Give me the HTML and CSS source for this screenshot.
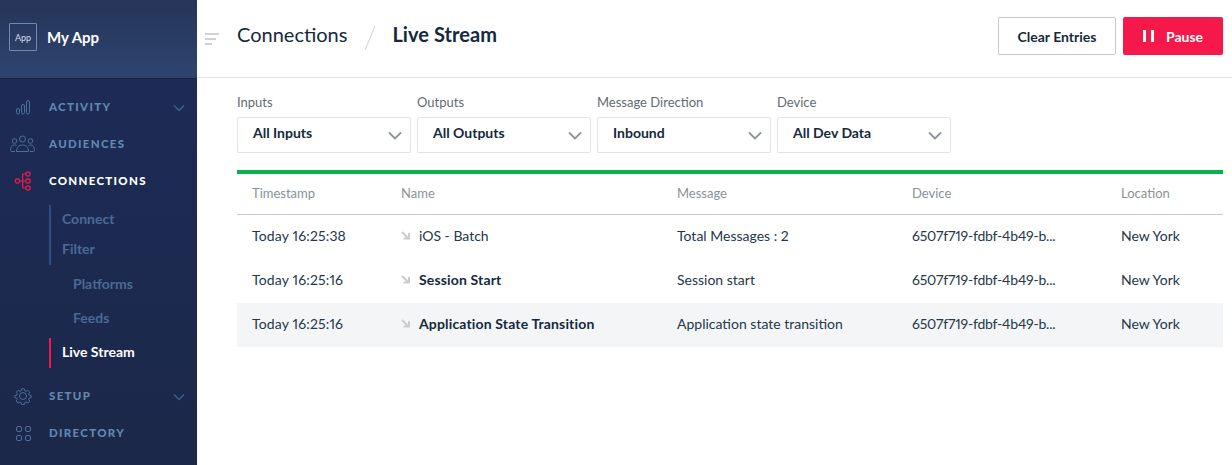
FILE: index.html
```html
<!DOCTYPE html>
<html lang="en">
<head>
    <meta charset="UTF-8">
    <title>Live Stream</title>
    <link rel="stylesheet" href="styles.css">
</head>
<body>
    <aside class="sidebar">
        <div class="brand">
            <div class="brand-logo">App</div>
            <div class="brand-name">My App</div>
        </div>
        <nav class="nav">
            <div class="nav-item">
                <svg class="nav-icon" width="24" height="24" viewBox="0 0 24 24" fill="none" stroke="#4d7099"><rect x="5.500" y="13.500" width="3" height="5.500" rx="1.500"/><rect x="10.500" y="9.500" width="3" height="9.500" rx="1.500"/><rect x="15.500" y="5.500" width="3" height="13.500" rx="1.500"/></svg>
                <span class="nav-label">ACTIVITY</span>
                <svg class="nav-chevron" width="12" height="8" viewBox="0 0 12 8" fill="none" stroke="#3f5f8a" stroke-width="1.500"><path d="M1 1.500l5 5 5-5"/></svg>
            </div>
            <div class="nav-item">
                <svg class="nav-icon" width="26" height="18" viewBox="0 0 26 18" fill="none" stroke="#4d7099"><circle cx="12.500" cy="4" r="3"/><circle cx="4.500" cy="6" r="2.300"/><circle cx="20.500" cy="6" r="2.300"/><path d="M6.500 16.500c0-4.500 2.500-6.500 6-6.500s6 2 6 6.500z"/><path d="M6.500 10.500c-.7-.3-1.300-.5-2-.5-2.500 0-4 2-4 5.500 0 .7.500 1 1.500 1h3M18.500 10.500c.7-.3 1.300-.5 2-.5 2.500 0 4 2 4 5.500 0 .7-.5 1-1.500 1h-3"/></svg>
                <span class="nav-label">AUDIENCES</span>
            </div>
            <div class="nav-item is-active">
                <svg class="nav-icon" width="24" height="24" viewBox="0 0 24 24" fill="none" stroke="#f5194b" stroke-width="1.200"><circle cx="6.500" cy="12" r="2.200"/><circle cx="17" cy="5" r="2.200"/><circle cx="17" cy="12" r="2.200"/><circle cx="17" cy="19" r="2.200"/><path d="M8.700 12h6.100M11.700 12V5.500c0-.4.200-.5.500-.5h2.600M11.700 12v6.500c0 .4.200.5.500.5h2.600"/></svg>
                <span class="nav-label">CONNECTIONS</span>
            </div>
            <div class="sub-group">
                <div class="sub-item">Connect</div>
                <div class="sub-item">Filter</div>
            </div>
            <div class="sub-nested">
                <div class="nested-item">Platforms</div>
                <div class="nested-item">Feeds</div>
            </div>
            <div class="sub-current">Live Stream</div>
            <div class="nav-item nav-item-setup">
                <svg class="nav-icon" width="24" height="24" viewBox="0 0 24 24" fill="none" stroke="#4d7099"><circle cx="12" cy="12" r="3.500"/><path d="M10.300 4.500h3.400l.5 2.300 1.700.7 2-1.300 2.400 2.400-1.300 2 .7 1.700 2.300.5v2.400l-2.300.5-.7 1.700 1.300 2-2.400 2.400-2-1.300-1.700.7-.5 2.300h-3.400l-.5-2.300-1.700-.7-2 1.300-2.400-2.400 1.300-2-.7-1.700-2.300-.5v-2.400l2.300-.5.7-1.700-1.300-2 2.400-2.400 2 1.300 1.700-.7z" transform="translate(12 12) scale(.82) translate(-12 -13.200)" stroke-width="1.200"/></svg>
                <span class="nav-label">SETUP</span>
                <svg class="nav-chevron" width="12" height="8" viewBox="0 0 12 8" fill="none" stroke="#3f5f8a" stroke-width="1.500"><path d="M1 1.500l5 5 5-5"/></svg>
            </div>
            <div class="nav-item">
                <svg class="nav-icon" width="24" height="24" viewBox="0 0 24 24" fill="none" stroke="#4d7099"><rect x="5.500" y="5.500" width="5" height="5" rx="1.500"/><rect x="14.500" y="5.500" width="5" height="5" rx="1.500"/><rect x="5.500" y="14.500" width="5" height="5" rx="1.500"/><rect x="14.500" y="14.500" width="5" height="5" rx="1.500"/></svg>
                <span class="nav-label">DIRECTORY</span>
            </div>
        </nav>
    </aside>

    <main class="main">
        <header class="topbar">
            <svg class="menu-icon" width="14" height="12" viewBox="0 0 14 12" fill="#cfd2d4"><rect width="14" height="2"/><rect y="5" width="11" height="2"/><rect y="10" width="7" height="2"/></svg>
            <div class="crumb">Connections</div>
            <svg class="crumb-sep" width="12" height="26" viewBox="0 0 12 26" fill="none" stroke="#cfd2d4"><path d="M11 1L1 25"/></svg>
            <div class="crumb crumb-current">Live Stream</div>
            <div class="actions">
                <button class="btn btn-outline">Clear Entries</button>
                <button class="btn btn-primary"><span class="pause-icon"></span>Pause</button>
            </div>
        </header>

        <section class="filters">
            <div class="filter">
                <label class="filter-label">Inputs</label>
                <div class="select">All Inputs
                    <svg width="14" height="9" viewBox="0 0 14 9" fill="none" stroke="#8c9499" stroke-width="1.800"><path d="M1 1.500l6 6 6-6"/></svg>
                </div>
            </div>
            <div class="filter">
                <label class="filter-label">Outputs</label>
                <div class="select">All Outputs
                    <svg width="14" height="9" viewBox="0 0 14 9" fill="none" stroke="#8c9499" stroke-width="1.800"><path d="M1 1.500l6 6 6-6"/></svg>
                </div>
            </div>
            <div class="filter">
                <label class="filter-label">Message Direction</label>
                <div class="select">Inbound
                    <svg width="14" height="9" viewBox="0 0 14 9" fill="none" stroke="#8c9499" stroke-width="1.800"><path d="M1 1.500l6 6 6-6"/></svg>
                </div>
            </div>
            <div class="filter">
                <label class="filter-label">Device</label>
                <div class="select">All Dev Data
                    <svg width="14" height="9" viewBox="0 0 14 9" fill="none" stroke="#8c9499" stroke-width="1.800"><path d="M1 1.500l6 6 6-6"/></svg>
                </div>
            </div>
        </section>

        <section class="stream">
            <div class="row row-head">
                <div>Timestamp</div>
                <div>Name</div>
                <div>Message</div>
                <div>Device</div>
                <div>Location</div>
            </div>
            <div class="row">
                <div class="time-cell">Today 16:25:38</div>
                <div class="name-cell"><svg width="9" height="9" viewBox="0 0 9 9" fill="none" stroke="#c9cdd0" stroke-width="2"><path d="M1 1l6.500 6.500M8 2v5.500H2.500"/></svg>iOS - Batch</div>
                <div>Total Messages : 2</div>
                <div class="device-cell">6507f719-fdbf-4b49-b...</div>
                <div>New York</div>
            </div>
            <div class="row">
                <div class="time-cell">Today 16:25:16</div>
                <div class="name-cell is-bold"><svg width="9" height="9" viewBox="0 0 9 9" fill="none" stroke="#c9cdd0" stroke-width="2"><path d="M1 1l6.500 6.500M8 2v5.500H2.500"/></svg>Session Start</div>
                <div>Session start</div>
                <div class="device-cell">6507f719-fdbf-4b49-b...</div>
                <div>New York</div>
            </div>
            <div class="row row-hover">
                <div class="time-cell">Today 16:25:16</div>
                <div class="name-cell is-bold"><svg width="9" height="9" viewBox="0 0 9 9" fill="none" stroke="#c9cdd0" stroke-width="2"><path d="M1 1l6.500 6.500M8 2v5.500H2.500"/></svg>Application State Transition</div>
                <div>Application state transition</div>
                <div class="device-cell">6507f719-fdbf-4b49-b...</div>
                <div>New York</div>
            </div>
        </section>
    </main>
</body>
</html>
```
FILE: styles.css
```css
* {
    box-sizing: border-box;
}
body {
    margin: 0;
    height: 465px;
    overflow: hidden;
    display: flex;
    font-family: "Lato", Arial, sans-serif;
    font-variant-numeric: proportional-nums;
    color: #14293d;
    background-color: #fff;
}

/* sidebar */
.sidebar {
    width: 197px;
    flex-shrink: 0;
    background: linear-gradient(#1d2c59, #1b2849);
}
.brand {
    height: 79px;
    display: flex;
    align-items: center;
    padding: 0 0 4px 9px;
    background: linear-gradient(#263558, #2e4470);
    border-bottom: 1px solid #16233f;
}
.brand-logo {
    width: 28px;
    height: 28px;
    border: 1px solid #6d8cb0;
    border-radius: 1px;
    color: #d5dde8;
    font-size: 9px;
    display: flex;
    align-items: center;
    justify-content: center;
}
.brand-name {
    margin-left: 10px;
    color: #fff;
    font-size: 15px;
    font-weight: 700;
}
.nav {
    padding-top: 9px;
}
.nav-item {
    height: 37px;
    display: flex;
    align-items: center;
    position: relative;
    padding-left: 49px;
}
.nav-icon {
    position: absolute;
    left: 23px;
    top: 50%;
    transform: translate(-50%, -50%);
}
.nav-label {
    color: #6188b0;
    font-size: 11.500px;
    font-weight: 900;
    letter-spacing: 1.300px;
}
.nav-chevron {
    position: absolute;
    left: 173px;
    top: 16px;
}
.is-active .nav-label {
    color: #fff;
}
.sub-group {
    margin: 6px 0 0 49px;
    height: 60px;
    border-left: 2px solid #2b4f80;
    padding-left: 11px;
}
.sub-item {
    height: 30px;
    line-height: 27px;
    color: #4a6a96;
    font-size: 14px;
    font-weight: 700;
}
.sub-nested {
    padding: 2px 0 0 73px;
}
.nested-item {
    height: 34px;
    line-height: 34px;
    color: #4a6a96;
    font-size: 14px;
    font-weight: 700;
}
.sub-current {
    margin: 3px 0 0 49px;
    height: 30px;
    line-height: 28px;
    border-left: 2px solid #f5194b;
    padding-left: 11px;
    color: #fff;
    font-size: 14px;
    font-weight: 700;
}
.nav-item-setup {
    margin-top: 9px;
}

/* main */
.main {
    flex: 1;
    min-width: 0;
}
.topbar {
    height: 78px;
    border-bottom: 1px solid #e2e3e4;
    display: flex;
    align-items: center;
    padding: 0 9px 5px 8px;
}
.menu-icon {
    margin-right: 18px;
    margin-top: 6px;
}
.crumb {
    font-size: 20px;
    color: #14293d;
    margin-bottom: 4px;
}
.crumb-sep {
    margin: 3px 17px 0 17px;
}
.crumb-current {
    font-weight: 700;
    margin-left: -1px;
    letter-spacing: .05px;
}
.actions {
    margin-left: auto;
    display: flex;
    gap: 7px;
}
.btn {
    height: 38px;
    border-radius: 2px;
    font-family: inherit;
    font-size: 14px;
    font-weight: 700;
    display: flex;
    align-items: center;
    justify-content: center;
}
.btn-outline {
    width: 118px;
    background-color: #fff;
    border: 1px solid #c6cacc;
    color: #14293d;
}
.btn-primary {
    width: 100px;
    background-color: #f5194b;
    border: none;
    color: #fff;
}
.pause-icon {
    width: 11px;
    height: 12px;
    margin-right: 12px;
    border-left: 3px solid #fff;
    border-right: 3px solid #fff;
}
.filters {
    display: flex;
    gap: 6px;
    padding: 16px 0 0 40px;
}
.filter-label {
    display: block;
    height: 23px;
    font-size: 13px;
    color: #5f6b73;
}
.select {
    width: 174px;
    height: 36px;
    border: 1px solid #e2e3e4;
    border-radius: 2px;
    padding: 0 8px 5px 15px;
    display: flex;
    align-items: center;
    justify-content: space-between;
    font-size: 14px;
    font-weight: 700;
}
.select svg {
    margin-top: 5px;
}
.stream {
    margin: 17px 9px 0 40px;
    border-top: 4px solid #05b24c;
}
.row {
    display: grid;
    grid-template-columns: 149px 276px 235px 209px 1fr;
    align-items: center;
    height: 44px;
    padding: 0 0 4px 15px;
    font-size: 14px;
    color: #24384a;
}
.row-head {
    height: 41px;
    padding-bottom: 2px;
    border-bottom: 1px solid #c8cbcd;
    font-size: 13px;
    color: #8a9297;
}
.row-hover {
    background-color: #f4f5f7;
}
.time-cell {
    letter-spacing: .15px;
}
.device-cell {
    letter-spacing: -.2px;
}
.name-cell {
    display: flex;
    align-items: center;
}
.name-cell svg {
    margin-right: 9px;
}
.is-bold {
    font-weight: 700;
    color: #14293d;
    letter-spacing: .15px;
}
```
